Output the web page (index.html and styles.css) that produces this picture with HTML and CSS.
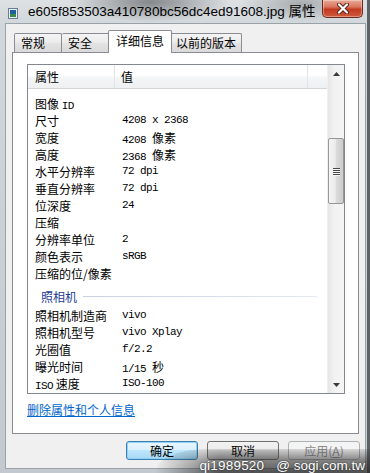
FILE: index.html
```html
<!DOCTYPE html>
<html lang="zh-CN">
<head>
    <meta charset="utf-8"/>
    <title>属性</title>
    <meta name="viewport" content="width=device-width, initial-scale=1.0"/>
    <link rel="stylesheet" href="styles.css">
</head>
<body>
<div class="window">
    <div class="titlebar">
        <svg class="file_icon" width="10" height="11" viewBox="0 0 10 11">
            <rect x="0.5" y="0.5" width="9" height="10" fill="#e8eef4" stroke="#6a7d90"/>
            <rect x="2" y="2" width="6" height="7" fill="#1f5f9e"/>
            <rect x="2" y="6" width="6" height="3" fill="#3c8a4a"/>
        </svg>
        <span class="title">e605f853503a410780bc56dc4ed91608.jpg 属性</span>
        <div class="close_btn">
            <svg width="14" height="11" viewBox="0 0 14 11">
                <path d="M3 1.5 L11 9.5 M11 1.5 L3 9.5" stroke="#5b2218" stroke-width="4" stroke-linecap="round"/>
                <path d="M3 1.5 L11 9.5 M11 1.5 L3 9.5" stroke="#ffffff" stroke-width="2.2" stroke-linecap="round"/>
            </svg>
        </div>
    </div>

    <div class="client">
        <div class="tabs">
            <div class="tab">常规</div>
            <div class="tab">安全</div>
            <div class="tab active">详细信息</div>
            <div class="tab">以前的版本</div>
        </div>

        <div class="panel">
            <div class="listview">
                <div class="lv_body">
                    <div class="lv_header">
                        <span class="hd_name">属性</span>
                        <span class="hd_value">值</span>
                        <span class="hd_rest"></span>
                    </div>
                    <div class="lv_rows">
                        <div class="row"><span class="name">图像 <span class="latin">ID</span></span><span class="value"></span></div>
                        <div class="row"><span class="name">尺寸</span><span class="value">4208 x 2368</span></div>
                        <div class="row"><span class="name">宽度</span><span class="value">4208 <span class="cjk">像素</span></span></div>
                        <div class="row"><span class="name">高度</span><span class="value">2368 <span class="cjk">像素</span></span></div>
                        <div class="row"><span class="name">水平分辨率</span><span class="value">72 dpi</span></div>
                        <div class="row"><span class="name">垂直分辨率</span><span class="value">72 dpi</span></div>
                        <div class="row"><span class="name">位深度</span><span class="value">24</span></div>
                        <div class="row"><span class="name">压缩</span><span class="value"></span></div>
                        <div class="row"><span class="name">分辨率单位</span><span class="value">2</span></div>
                        <div class="row"><span class="name">颜色表示</span><span class="value">sRGB</span></div>
                        <div class="row"><span class="name">压缩的位/像素</span><span class="value"></span></div>

                        <div class="group_head">照相机</div>

                        <div class="row"><span class="name">照相机制造商</span><span class="value">vivo</span></div>
                        <div class="row"><span class="name">照相机型号</span><span class="value">vivo Xplay</span></div>
                        <div class="row"><span class="name">光圈值</span><span class="value">f/2.2</span></div>
                        <div class="row"><span class="name">曝光时间</span><span class="value">1/15 <span class="cjk">秒</span></span></div>
                        <div class="row"><span class="name"><span class="latin">ISO</span> 速度</span><span class="value">ISO-100</span></div>
                    </div>
                </div>
                <div class="scrollbar">
                    <div class="sb_arrow">
                        <svg width="7" height="4" viewBox="0 0 7 4"><polygon points="0,4 3.5,0 7,4" fill="#3a3a3a"/></svg>
                    </div>
                    <div class="sb_track">
                        <div class="sb_thumb">
                            <span class="grip"></span>
                            <span class="grip"></span>
                            <span class="grip"></span>
                            <span class="grip"></span>
                        </div>
                    </div>
                    <div class="sb_arrow">
                        <svg width="7" height="4" viewBox="0 0 7 4"><polygon points="0,0 7,0 3.5,4" fill="#3a3a3a"/></svg>
                    </div>
                </div>
            </div>
            <a class="remove_link" href="#">删除属性和个人信息</a>
        </div>

        <div class="buttons">
            <button class="btn default">确定</button>
            <button class="btn">取消</button>
            <button class="btn disabled">应用(<u>A</u>)</button>
        </div>
    </div>
</div>

<div class="wm_shade"></div>
<div class="watermark">
    <span class="wm_user">qi1989520</span>
    <span class="wm_site">@ sogi.com.tw</span>
</div>
</body>
</html>
```

FILE: styles.css
```css
body {
    margin: 0;
    width: 370px;
    height: 473px;
    overflow: hidden;
    position: relative;
    font-family: "Noto Sans CJK SC", sans-serif;
    font-size: 12px;
    color: #000;
    background:
        linear-gradient(to left, #5d6266 0, #5d6266 3px, transparent 3px),
        radial-gradient(ellipse 80px 20px at 150px 2px, rgba(60, 64, 68, .55), rgba(60, 64, 68, 0)),
        radial-gradient(ellipse 60px 18px at 300px 4px, rgba(70, 74, 78, .35), rgba(70, 74, 78, 0)),
        linear-gradient(to bottom, #dde1e4 0, #d2d7db 24px, #c3c9ce 100%);
}

.window {
    width: 370px;
    height: 473px;
    display: flex;
    flex-direction: column;
}

/* title bar */
.titlebar {
    height: 23px;
    display: flex;
    align-items: flex-start;
    padding-left: 8px;
}

.file_icon {
    margin-top: 8px;
    flex: 0 0 auto;
}

.title {
    margin-left: 10px;
    margin-top: 3px;
    font-family: "Liberation Sans", "Noto Sans CJK SC", sans-serif;
    font-size: 13.5px;
    line-height: 18px;
    white-space: nowrap;
}

.close_btn {
    margin-left: auto;
    margin-right: 7px;
    width: 41px;
    height: 18px;
    box-sizing: border-box;
    border: 1px solid #6a2a1e;
    border-top: none;
    border-radius: 0 0 5px 5px;
    background: linear-gradient(to bottom, #e9a996 0, #d9775f 40%, #c13a20 55%, #cf5a3c 100%);
    box-shadow: inset 0 0 0 1px rgba(255, 255, 255, .35);
    display: flex;
    align-items: center;
    justify-content: center;
}

/* client area */
.client {
    flex: 1;
    margin: 0 4px 4px 5px;
    padding: 6px 6px 0 6px;
    background: #f0f0f0;
    border: 1px solid #9aa2a9;
    display: flex;
    flex-direction: column;
}

.tabs {
    display: flex;
    align-items: flex-end;
    height: 23px;
    margin: 0 0 -1px 2px;
    position: relative;
    z-index: 1;
}

.tab {
    min-width: 48px;
    height: 19px;
    margin-bottom: 1px;
    padding: 0 5px 0 6px;
    box-sizing: border-box;
    border: 1px solid #898c95;
    border-bottom: none;
    border-radius: 2px 2px 0 0;
    background: linear-gradient(to bottom, #f4f4f4 0, #ececec 45%, #e2e2e2 55%, #dadada 100%);
    line-height: 18px;
    white-space: nowrap;
}

.tab + .tab {
    border-left: none;
}

.tab.active {
    min-width: 64px;
    height: 23px;
    margin: 0 -2px;
    padding: 0 6px 0 7px;
    border-left: 1px solid #898c95;
    background: #fff;
    line-height: 20px;
    position: relative;
    z-index: 2;
}

.panel {
    height: 382px;
    box-sizing: border-box;
    border: 1px solid #898c95;
    background: #fff;
    padding: 11px 13px 0 14px;
}

/* list view */
.listview {
    width: 318px;
    height: 330px;
    box-sizing: border-box;
    border: 1px solid #828790;
    display: flex;
}

.lv_body {
    flex: 1;
    overflow: hidden;
}

.lv_header {
    display: flex;
    height: 23px;
    border-bottom: 1px solid #d5d5d5;
    background: linear-gradient(to bottom, #ffffff 0, #ffffff 45%, #f4f5f7 55%, #eef0f2 100%);
    line-height: 23px;
}

.hd_name {
    width: 87px;
    padding-left: 7px;
    box-sizing: border-box;
    border-right: 1px solid #e2e4e8;
}

.hd_value {
    width: 193px;
    padding-left: 6px;
    box-sizing: border-box;
    border-right: 1px solid #e2e4e8;
}

.hd_rest {
    flex: 1;
}

.lv_rows {
    padding-top: 6px;
}

.row {
    display: flex;
    height: 17px;
    line-height: 17px;
    white-space: nowrap;
}

.row .name {
    width: 88px;
    padding-left: 7px;
    box-sizing: border-box;
}

.row .value {
    padding-left: 6px;
    font-family: "Liberation Mono", monospace;
    font-size: 11px;
    letter-spacing: -0.6px;
}

.latin {
    font-family: "Liberation Mono", monospace;
    font-size: 11px;
    letter-spacing: -0.6px;
}

.cjk {
    font-family: "Noto Sans CJK SC", sans-serif;
    font-size: 12px;
    letter-spacing: 0;
}

.group_head {
    height: 25px;
    box-sizing: border-box;
    padding: 3px 10px 0 13px;
    display: flex;
    align-items: center;
    color: #1e3c96;
}

.group_head::after {
    content: "";
    flex: 1;
    height: 1px;
    margin-left: 6px;
    background: linear-gradient(to right, #c6d1e3, #e4e9f1);
}

/* scroll bar */
.scrollbar {
    width: 17px;
    display: flex;
    flex-direction: column;
    background: linear-gradient(to right, #e6e6e6 0, #f2f2f2 40%, #f5f5f5 100%);
    border-left: 1px solid #f0f0f0;
    box-sizing: border-box;
}

.sb_arrow {
    height: 17px;
    display: flex;
    align-items: center;
    justify-content: center;
}

.sb_track {
    flex: 1;
}

.sb_thumb {
    margin: 56px 0 0 0;
    height: 66px;
    box-sizing: border-box;
    border: 1px solid #979797;
    border-radius: 2px;
    background: linear-gradient(to right, #f4f4f4 0, #ebebeb 45%, #d9d9d9 55%, #cdcdcd 100%);
    display: flex;
    flex-direction: column;
    align-items: center;
    justify-content: center;
    gap: 1px;
}

.grip {
    width: 7px;
    height: 1px;
    background: #4a4a4a;
    box-shadow: 0 1px 0 #f4f4f4;
}

.remove_link {
    display: inline-block;
    margin-top: 8px;
    line-height: 16px;
    color: #0066cc;
    text-decoration: underline;
}

/* dialog buttons */
.buttons {
    display: flex;
    justify-content: flex-end;
    gap: 9px;
    margin: 7px -1px 0 0;
}

.btn {
    width: 72px;
    height: 19px;
    padding: 0;
    box-sizing: border-box;
    border: 1px solid #707070;
    border-radius: 3px;
    background: linear-gradient(to bottom, #f2f2f2 0, #ebebeb 50%, #dddddd 50%, #cfcfcf 100%);
    font-family: "Noto Sans CJK SC", sans-serif;
    font-size: 12px;
    line-height: 16px;
    color: #000;
}

.btn.default {
    border-color: #3c7fb1;
    background: linear-gradient(to bottom, #eaf6fd 0, #d9f0fc 50%, #bee6fd 50%, #a7d9f5 100%);
    box-shadow: inset 0 0 0 1px #8fd3f6;
}

.btn.disabled {
    border-color: #adb2b5;
    background: #f4f4f4;
    color: #8a8a8a;
}

/* image watermark over the corner */
.wm_shade {
    position: absolute;
    right: 0;
    bottom: 0;
    width: 215px;
    height: 24px;
    border-top-left-radius: 50px 24px;
    background: linear-gradient(to bottom, rgba(45, 45, 45, .15) 0, rgba(45, 45, 45, .55) 45%, rgba(40, 40, 40, .75) 100%);
    -webkit-mask-image: linear-gradient(to right, transparent 0, #000 30%);
    mask-image: linear-gradient(to right, transparent 0, #000 30%);
}

.watermark {
    position: absolute;
    right: 5px;
    bottom: 0;
    height: 14px;
    display: flex;
    align-items: flex-end;
    gap: 12px;
    font-family: "Liberation Sans", sans-serif;
    font-size: 13.5px;
    line-height: 14px;
    color: #fff;
    text-shadow: 0 0 2px #222;
}

.wm_user {
    letter-spacing: 0.2px;
}
```
